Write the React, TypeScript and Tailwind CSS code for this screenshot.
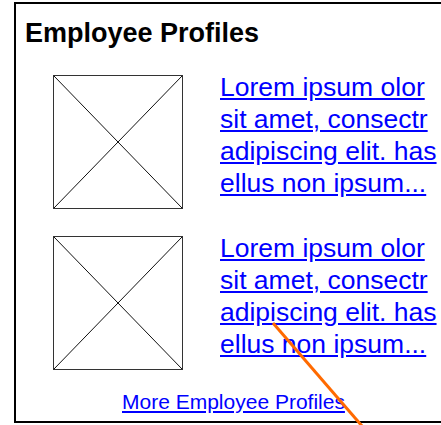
import { useState } from 'react'

function Placeholder() {
  return (
    <div className="mt-[4px] h-[134px] w-[130px] shrink-0 border border-[#333]">
      <svg className="h-full w-full" viewBox="0 0 128 132" preserveAspectRatio="none">
        <line x1="0" y1="0" x2="128" y2="132" stroke="#111" strokeWidth="1" />
        <line x1="128" y1="0" x2="0" y2="132" stroke="#111" strokeWidth="1" />
      </svg>
    </div>
  )
}

function ProfileRow() {
  return (
    <div className="flex items-start">
      <div className="ml-[37px]">
        <Placeholder />
      </div>
      <a
        href="#"
        className="ml-[37px] w-[224px] text-[26.5px] leading-[32px] text-[#0000ff] underline"
      >
        Lorem ipsum olor sit amet, consectr adipiscing elit. has ellus non ipsum...
      </a>
    </div>
  )
}

export default function App() {
  const [rows] = useState([1, 2])

  return (
    <div className="relative h-[425px] w-[441px] overflow-hidden bg-white font-['Liberation_Sans',Arial,sans-serif]">
      <div className="ml-[14px] mt-[2px] h-[421px] w-[460px] border-y-2 border-l-2 border-black">
        <h1 className="ml-[9px] mt-[9px] text-[27px] font-bold text-black">Employee Profiles</h1>
        <div className="mt-[17px] flex flex-col gap-[23px]">
          {rows.map((r) => (
            <ProfileRow key={r} />
          ))}
        </div>
        <div className="mt-[16px] pl-[106px]">
          <a href="#" className="text-[21px] text-[#0000ff] underline">
            More Employee Profiles
          </a>
        </div>
      </div>
      {/* annotation stroke */}
      <svg className="pointer-events-none absolute left-0 top-0" width="441" height="425">
        <line x1="273" y1="323" x2="362" y2="426" stroke="#ff6a00" strokeWidth="3" />
      </svg>
    </div>
  )
}
